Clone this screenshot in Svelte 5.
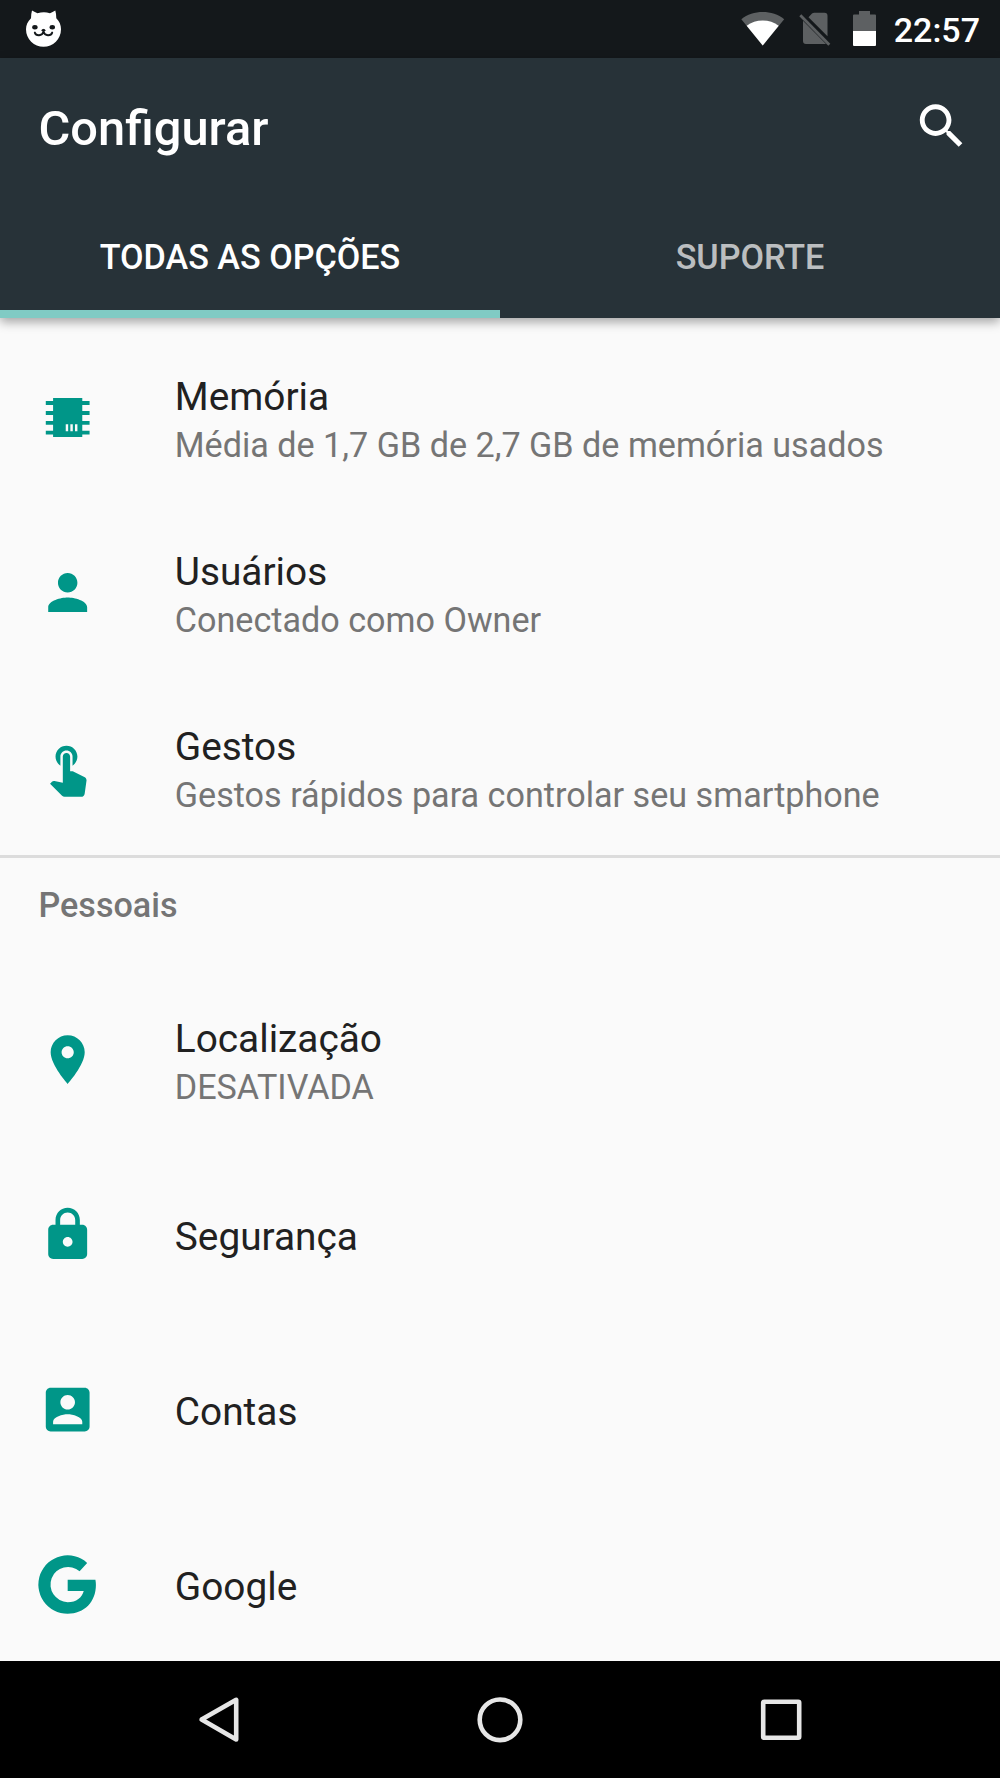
<script lang="ts">
	type Item = { icon: string; title: string; summary?: string };

	const device: Item[] = [
		{ icon: 'memory', title: 'Memória', summary: 'Média de 1,7 GB de 2,7 GB de memória usados' },
		{ icon: 'person', title: 'Usuários', summary: 'Conectado como Owner' },
		{ icon: 'touch', title: 'Gestos', summary: 'Gestos rápidos para controlar seu smartphone' }
	];

	const personal: Item[] = [
		{ icon: 'place', title: 'Localização', summary: 'DESATIVADA' },
		{ icon: 'lock', title: 'Segurança' },
		{ icon: 'account', title: 'Contas' },
		{ icon: 'google', title: 'Google' }
	];

	// all on a 24x24 grid
	const icons: Record<string, string> = {
		memory:
			'M6 4h12v1.2h3v1.6h-3v2.5h3v1.6h-3v2.5h3V15h-3v2.4h3V19h-3v1H6v-1H3v-1.6h3V15H3v-1.6h3v-2.5H3V9.3h3V6.8H3V5.2h3zM11.2 14.7v2.9h1v-2.9zm1.9 0v2.9h1v-2.9zm1.9 0v2.9h1v-2.9z',
		person:
			'M12 12c2.21 0 4-1.79 4-4s-1.79-4-4-4-4 1.79-4 4 1.79 4 4 4zm0 2c-2.67 0-8 1.34-8 4v2h16v-2c0-2.66-5.33-4-8-4z',
		touch:
			'M9 11.24V7.5C9 6.12 10.12 5 11.5 5S14 6.12 14 7.5v3.74c1.21-.81 2-2.18 2-3.74C16 5.01 13.99 3 11.5 3S7 5.01 7 7.5c0 1.56.79 2.93 2 3.74zm9.84 4.63l-4.54-2.26c-.17-.07-.35-.11-.54-.11H13v-6c0-.83-.67-1.5-1.5-1.5S10 6.67 10 7.5v10.74l-3.43-.72c-.08-.01-.15-.03-.24-.03-.31 0-.59.13-.79.33l-.79.8 4.94 4.94c.27.27.65.44 1.06.44h6.79c.75 0 1.33-.55 1.44-1.28l.75-5.27c.01-.07.02-.14.02-.2 0-.62-.38-1.16-.91-1.38z',
		place:
			'M12 2C8.13 2 5 5.13 5 9c0 5.25 7 13 7 13s7-7.75 7-13c0-3.87-3.13-7-7-7zm0 9.5c-1.38 0-2.5-1.12-2.5-2.5s1.12-2.5 2.5-2.5 2.5 1.12 2.5 2.5-1.12 2.5-2.5 2.5z',
		lock: 'M18 8h-1V6c0-2.76-2.24-5-5-5S7 3.24 7 6v2H6c-1.1 0-2 .9-2 2v10c0 1.1.9 2 2 2h12c1.1 0 2-.9 2-2V10c0-1.1-.9-2-2-2zm-6 9c-1.1 0-2-.9-2-2s.9-2 2-2 2 .9 2 2-.9 2-2 2zm3.1-9H8.9V6c0-1.71 1.39-3.1 3.1-3.1s3.1 1.39 3.1 3.1v2z',
		account:
			'M3 5v14c0 1.1.89 2 2 2h14c1.1 0 2-.9 2-2V5c0-1.1-.9-2-2-2H5c-1.11 0-2 .9-2 2zm12 4c0 1.66-1.34 3-3 3s-3-1.34-3-3 1.34-3 3-3 3 1.34 3 3zm-9 8c0-2 4-3.1 6-3.1s6 1.1 6 3.1v1H6v-1z',
		google:
			'M20 3.1A12 12 0 1 0 12 24C18.9 24 23.6 19.1 23.6 12.2C23.6 11.5 23.55 10.8 23.4 10.05H12V14.6H18.6C17.9 17.3 15.6 19.25 12 19.25A7.25 7.25 0 1 1 16.9 6.5Z'
	};
</script>

{#snippet row(item: Item)}
	<li class="row">
		<svg class="icon" viewBox="-0.2 -0.15 24 24" aria-hidden="true">
			<path fill-rule="evenodd" d={icons[item.icon]} />
		</svg>
		<div class="text">
			<span class="title">{item.title}</span>
			{#if item.summary}
				<span class="summary">{item.summary}</span>
			{/if}
		</div>
	</li>
{/snippet}

<div class="screen">
	<div class="status">
		<svg width="36" height="38" viewBox="0 0 36 38">
			<path
				fill="#fff"
				d="M6 .5Q9 2 11.5 3.3Q18 1.2 24 3.3Q26.5 2 29.3 .5Q30.3 4 30.3 8.3C33.5 11.5 35 15 35 19.3A17.5 17.5 0 0 1 0 19.3C0 15 1.8 11.5 5 8.3Q5 4 6 .5z"
			/>
			<g fill="#14181b">
				<ellipse cx="8.9" cy="17.3" rx="2.7" ry="2.2" />
				<ellipse cx="26.3" cy="17.3" rx="2.7" ry="2.2" />
				<ellipse cx="17.5" cy="20.3" rx="1.9" ry="1.4" />
			</g>
			<path
				d="M8.8 22.6c1.2 3.6 7.4 3.6 8.7-.8c1.3 4.4 7.5 4.4 8.7 .8"
				fill="none"
				stroke="#14181b"
				stroke-width="1.9"
				stroke-linecap="round"
			/>
		</svg>
		<div class="tray">
			<svg class="wifi" width="44" height="34" viewBox="0 0 44 34">
				<path fill="#5d6062" d="M21.7 33.5L.3 7.3C12-2.3 31.5-2.3 43.2 7.3z" />
				<path fill="#fff" d="M21.7 33.5L5.7 13.8C14.5 6.7 29 6.7 37.7 13.8z" />
			</svg>
			<svg class="sim" width="32" height="34" viewBox="0 0 32 34">
				<path
					fill="#5d6062"
					d="M9.5 5.3L13 1.6Q14 .8 15.3 .8H25.5Q28.5 .8 28.5 3.8V24.2zM4 8.7L27 32H7Q4 32 4 29z"
				/>
				<path stroke="#5d6062" stroke-width="2.8" d="M1.3 3.2L30.3 32.7" />
			</svg>
			<svg class="battery" width="23" height="35" viewBox="0 0 23 35">
				<path fill="#5d6062" d="M6 0H17V3.5H22Q23 3.5 23 4.5V20H0V4.5Q0 3.5 1 3.5H6z" />
				<path fill="#fff" d="M0 20H23V34Q23 35 22 35H1Q0 35 0 34z" />
			</svg>
			<span class="clock">22:57</span>
		</div>
	</div>

	<header>
		<div class="toolbar">
			<h1>Configurar</h1>
			<svg class="search" viewBox="-0.2 0 24 24" role="img" aria-label="Pesquisar">
				<path
					d="M15.5 14h-.79l-.28-.27C15.41 12.59 16 11.11 16 9.5 16 5.91 13.09 3 9.5 3S3 5.91 3 9.5 5.91 16 9.5 16c1.61 0 3.09-.59 4.23-1.57l.27.28v.79l5 4.99L20.49 19l-4.99-5zm-6 0C7.01 14 5 11.99 5 9.5S7.01 5 9.5 5 14 7.01 14 9.5 11.99 14 9.5 14z"
				/>
			</svg>
		</div>
		<nav class="tabs">
			<span class="tab active">TODAS AS OPÇÕES</span>
			<span class="tab">SUPORTE</span>
		</nav>
	</header>

	<main>
		<ul>
			{#each device as item (item.title)}
				{@render row(item)}
			{/each}
		</ul>
		<section>
			<h2>Pessoais</h2>
			<ul>
				{#each personal as item (item.title)}
					{@render row(item)}
				{/each}
			</ul>
		</section>
	</main>

	<footer>
		<svg width="46" height="50" viewBox="0 0 46 50">
			<path d="M39.2 4.8V44.4L4.6 24.6z" />
		</svg>
		<svg width="50" height="50" viewBox="0 0 50 50">
			<circle cx="25" cy="24.8" r="20.3" />
		</svg>
		<svg width="46" height="50" viewBox="0 0 46 50">
			<rect x="6.2" y="6.8" width="36" height="36" rx="1" />
		</svg>
	</footer>
</div>

<style>
	:global(body) {
		background: #fafafa;
	}

	.screen {
		display: flex;
		flex-direction: column;
		width: 1000px;
		height: 1778px;
		overflow: hidden;
		background: #fafafa;
		font-family: Roboto, sans-serif;
	}

	svg {
		display: block;
		flex: none;
	}

	.status {
		display: flex;
		flex: none;
		align-items: flex-start;
		justify-content: space-between;
		box-sizing: border-box;
		height: 58px;
		padding: 10px 20px 0 26px;
		background: #14181b;
	}

	.tray {
		display: flex;
		align-items: flex-start;
	}

	.wifi {
		margin: 2px 14px 0 0;
	}

	.sim {
		margin: 2px 22px 0 0;
	}

	.battery {
		margin: 1px 18px 0 0;
	}

	.clock {
		color: #fff;
		font-size: 34px;
		font-weight: 500;
		line-height: 40px;
	}

	header {
		position: relative;
		flex: none;
		height: 259.5px;
		background: #273238;
		box-shadow: 0 4px 10px rgba(0, 0, 0, 0.35);
	}

	.toolbar {
		display: flex;
		align-items: center;
		justify-content: space-between;
		height: 136px;
		padding: 0 30px 0 38.5px;
	}

	h1 {
		margin: 0;
		padding-top: 4px;
		color: #fff;
		font-size: 48.8px;
		font-weight: 500;
		line-height: 57px;
	}

	.search {
		width: 58.4px;
		height: 58.4px;
		fill: #fff;
	}

	.tabs {
		display: flex;
		height: 123.5px;
	}

	.tab {
		flex: 1;
		box-sizing: border-box;
		padding-top: 43px;
		color: rgba(255, 255, 255, 0.7);
		font-size: 34.15px;
		font-weight: 500;
		line-height: 40px;
		text-align: center;
	}

	.tab.active {
		color: #fff;
		border-bottom: 8px solid #80cbc4;
	}

	main {
		flex: 1;
		min-height: 0;
		padding-top: 12.5px;
		overflow: hidden;
	}

	ul {
		margin: 0;
		padding: 0;
		list-style: none;
	}

	.row {
		display: flex;
		align-items: center;
		height: 175px;
		padding-left: 38px;
	}

	.icon {
		width: 58.4px;
		height: 58.4px;
		margin-right: 78.4px;
		fill: #009688;
		overflow: visible;
	}

	.text {
		display: flex;
		flex-direction: column;
		gap: 5px;
		padding-top: 4px;
	}

	.title {
		color: #212121;
		font-size: 38.8px;
		line-height: 46px;
	}

	.summary {
		color: #757575;
		font-size: 34.15px;
		line-height: 40px;
	}

	section {
		border-top: 3px solid #dcdcdc;
	}

	h2 {
		box-sizing: border-box;
		height: 114px;
		margin: 0;
		padding: 27px 38.5px 0;
		color: #757575;
		font-size: 34.15px;
		font-weight: 500;
		line-height: 40px;
	}

	footer {
		display: flex;
		flex: none;
		align-items: center;
		justify-content: space-between;
		height: 117px;
		padding: 0 197px;
		background: #000;
	}

	footer path,
	footer circle,
	footer rect {
		fill: none;
		stroke: #e6e6e6;
		stroke-width: 4.6;
		stroke-linejoin: round;
	}
</style>
